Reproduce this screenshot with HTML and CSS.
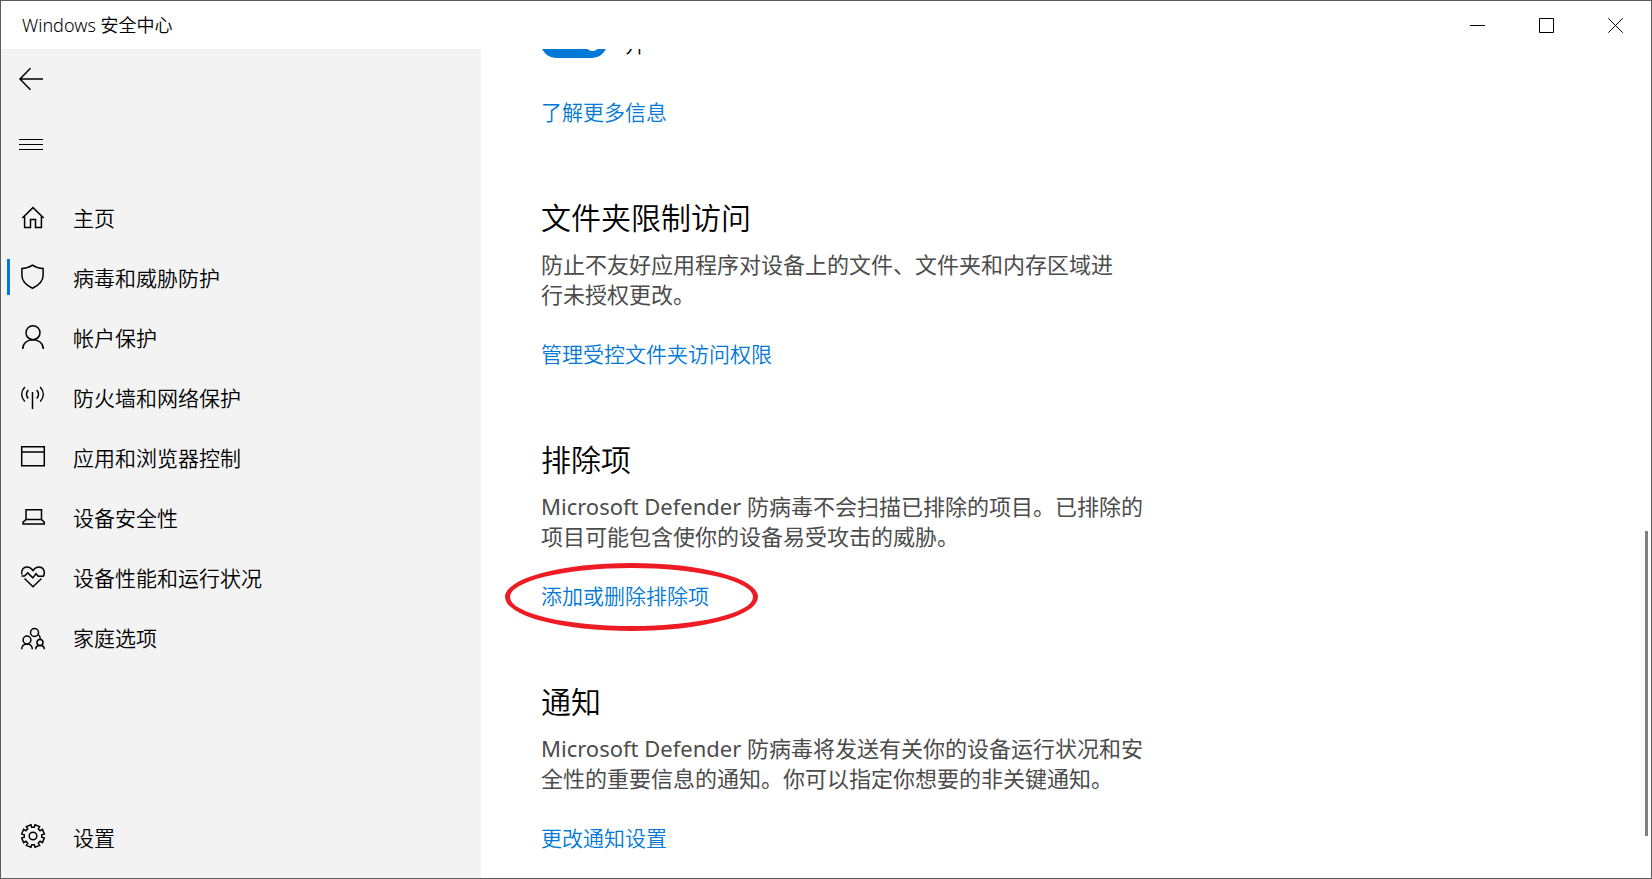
FILE: index.html
```
<!DOCTYPE html>
<html lang="zh-CN">
<head>
    <meta charset="UTF-8">
    <meta name="viewport" content="width=device-width, initial-scale=1.0">
    <title>Windows 安全中心</title>
    <link rel="stylesheet" href="styles.css">
</head>
<body>
    <div class="window">
        <header class="titlebar">
            <span class="titlebar-text">Windows 安全中心</span>
            <div class="window-buttons">
                <button type="button" aria-label="最小化">
                    <svg width="15" height="15" viewBox="0 0 15 15"><path d="M0 7.5h15"/></svg>
                </button>
                <button type="button" aria-label="最大化">
                    <svg width="15" height="15" viewBox="0 0 15 15"><path d="M.5.5h14v14H.5z"/></svg>
                </button>
                <button type="button" aria-label="关闭">
                    <svg width="15" height="15" viewBox="0 0 15 15"><path d="M.3.3l14.4 14.4M14.7.3L.3 14.7"/></svg>
                </button>
            </div>
        </header>

        <div class="main">
            <aside class="sidebar">
                <button type="button" class="icon-button" aria-label="返回">
                    <svg class="icon" viewBox="0 0 24 24"><path d="M24 12H1M11.5 1.3L1 12l10.5 10.7"/></svg>
                </button>
                <button type="button" class="icon-button" aria-label="菜单">
                    <svg class="icon thin" viewBox="0 0 24 24"><path d="M0 7.5h24M0 12.5h24M0 17.5h24"/></svg>
                </button>

                <nav class="nav">
                    <a href="#" class="nav-item">
                        <svg class="icon" viewBox="0 0 24 24"><path d="M1.3 12L12 1.6 22.7 12M3.6 10v11.5h5.9v-8h5v8h5.9V10"/></svg>
                        <span>主页</span>
                    </a>
                    <a href="#" class="nav-item active">
                        <svg class="icon" viewBox="0 0 24 24"><path d="M11.5-.9C8.5 1.200 5 2.400.9 2.400v7c0 6 4.800 10 10.600 12.800 5.800-2.800 10.600-6.800 10.600-12.800v-7C18 2.400 14.500 1.200 11.500-.9z"/></svg>
                        <span>病毒和威胁防护</span>
                    </a>
                    <a href="#" class="nav-item">
                        <svg class="icon" viewBox="0 0 24 24"><circle cx="12" cy="6.7" r="7"/><path d="M1.700 23c0-5.700 4.500-9.300 10.300-9.300S22.300 17.300 22.300 23"/></svg>
                        <span>帐户保护</span>
                    </a>
                    <a href="#" class="nav-item">
                        <svg class="icon" viewBox="0 0 24 24"><path d="M11.500 6v17M3.800 1C-.3 5.500-.3 11 3.800 15.500M19.200 1c4.100 4.500 4.100 10 0 14.500M7.300 4c-2.400 2.800-2.400 5.800 0 8.600M15.700 4c2.400 2.800 2.400 5.800 0 8.600"/></svg>
                        <span>防火墙和网络保护</span>
                    </a>
                    <a href="#" class="nav-item">
                        <svg class="icon" viewBox="0 0 24 24"><path d="M.7.700h22.600v19H.7zM.7 6h22.600"/></svg>
                        <span>应用和浏览器控制</span>
                    </a>
                    <a href="#" class="nav-item">
                        <svg class="icon" viewBox="0 0 24 24"><path d="M5 13.600V3.700h15.500v9.900zM5 13.600l-3 2.600V18h21.300v-1.800l-2.800-2.600"/></svg>
                        <span>设备安全性</span>
                    </a>
                    <a href="#" class="nav-item">
                        <svg class="icon" viewBox="0 0 24 24"><path d="M.9 8.500C-.1 4 2.500 1 6 1c2.800 0 4.500 1.300 6 3.500C13.500 2.300 15.200 1 18 1c4.500 0 6.800 4.800 4.300 9.300h-5l-2.300-2.600-3.200 4.200-5-5L3.500 10H.5M3.500 12.500l8.500 8.200 8.500-8.200"/></svg>
                        <span>设备性能和运行状况</span>
                    </a>
                    <a href="#" class="nav-item">
                        <svg class="icon" viewBox="0 0 24 24"><circle cx="13.500" cy="6.500" r="4"/><circle cx="6" cy="14" r="3.900"/><circle cx="19" cy="16.500" r="3"/><path d="M.7 23.200c0-3.200 2.300-5.300 5.300-5.300s5.300 2.100 5.300 5.300M14.700 23.200c0-2.300 1.800-3.700 4.300-3.700s4.300 1.400 4.300 3.700M17.300 8.500c1.400 1 2 2.700 2 4.500"/></svg>
                        <span>家庭选项</span>
                    </a>
                </nav>

                <a href="#" class="nav-item settings">
                    <svg class="icon" viewBox="-12 -10 24 24"><circle r="3.8"/><path d="M2-11.300L1.300-8.700H-1.300L-2-11.300-6.600-9.400-5.300-7.100-7.100-5.300-9.400-6.600-11.300-2-8.700-1.300V1.300L-11.300 2-9.400 6.600-7.100 5.300-5.300 7.100-6.600 9.400-2 11.300-1.300 8.700H1.300L2 11.300 6.600 9.400 5.300 7.100 7.100 5.300 9.400 6.600 11.300 2 8.700 1.300V-1.300L11.300-2 9.400-6.600 7.100-5.300 5.300-7.100 6.600-9.400z"/></svg>
                    <span>设置</span>
                </a>
            </aside>

            <main class="content">
                <section class="section">
                    <div class="toggle-row">
                        <input type="checkbox" class="toggle" id="toggleProtection" checked>
                        <label for="toggleProtection">开</label>
                    </div>
                    <a href="#" class="link">了解更多信息</a>
                </section>

                <section class="section">
                    <h2>文件夹限制访问</h2>
                    <p>防止不友好应用程序对设备上的文件、文件夹和内存区域进<br>行未授权更改。</p>
                    <a href="#" class="link">管理受控文件夹访问权限</a>
                </section>

                <section class="section">
                    <h2>排除项</h2>
                    <p>Microsoft Defender 防病毒不会扫描已排除的项目。已排除的<br>项目可能包含使你的设备易受攻击的威胁。</p>
                    <a href="#" class="link circled">添加或删除排除项</a>
                </section>

                <section class="section">
                    <h2>通知</h2>
                    <p>Microsoft Defender 防病毒将发送有关你的设备运行状况和安<br>全性的重要信息的通知。你可以指定你想要的非关键通知。</p>
                    <a href="#" class="link">更改通知设置</a>
                </section>

                <div class="scroll-thumb"></div>
            </main>
        </div>
    </div>
</body>
</html>
```
FILE: styles.css
```
*,
*::before,
*::after {
    box-sizing: border-box;
}

body {
    margin: 0;
    font-family: "Noto Sans", "Noto Sans CJK SC", sans-serif;
    font-weight: 350;
    color: #000;
    background-color: #fff;
}

button {
    border: none;
    padding: 0;
    background: none;
    cursor: pointer;
}

a {
    text-decoration: none;
}

svg {
    display: block;
    fill: none;
    stroke: #000;
}

.window {
    display: flex;
    flex-direction: column;
    height: 100vh;
    border: 1px solid #5c5c5c;
    overflow: hidden;
}

/* title bar */

.titlebar {
    display: flex;
    flex: none;
    justify-content: space-between;
    height: 48px;
    padding: 0 1px 0 21px;
}

.titlebar-text {
    font-size: 18px;
    line-height: 48px;
}

.window-buttons {
    display: flex;
}

.window-buttons button {
    display: flex;
    justify-content: center;
    align-items: flex-start;
    width: 69px;
    padding-top: 17px;
}

/* sidebar */

.main {
    display: flex;
    flex: 1;
    min-height: 0;
}

.sidebar {
    display: flex;
    flex-direction: column;
    flex: none;
    width: 480px;
    padding-bottom: 10px;
    background-color: #f3f3f3;
}

.icon-button {
    width: 60px;
    height: 60px;
    margin-bottom: 5px;
    padding-left: 18px;
}

.icon {
    flex: none;
    width: 24px;
    height: 24px;
    stroke-width: 1.5;
    overflow: visible;
}

.icon.thin {
    stroke-width: 1;
}

.nav {
    margin-top: 9px;
}

.nav-item {
    position: relative;
    display: flex;
    align-items: center;
    gap: 28px;
    height: 60px;
    padding-left: 20px;
    font-size: 21px;
    color: #000;
}

.nav-item span {
    padding-bottom: 2px;
}

.nav-item.active::before {
    content: "";
    position: absolute;
    top: 11px;
    left: 6px;
    width: 3px;
    height: 36px;
    background-color: #0078d7;
}

.settings {
    margin-top: auto;
}

/* content */

.content {
    position: relative;
    display: flex;
    flex-direction: column;
    justify-content: flex-end;
    flex: 1;
    gap: 71px;
    padding: 0 60px 25px;
    overflow: hidden;
}

.section {
    flex: none;
}

.section h2 {
    margin: 0 0 11px;
    font-size: 30px;
    font-weight: 350;
    line-height: 40px;
}

.section p {
    margin: 0 0 30px;
    font-size: 22px;
    font-weight: 400;
    line-height: 30px;
    color: #4c4c4c;
}

.link {
    display: block;
    width: fit-content;
    font-size: 21px;
    line-height: 30px;
    color: #0078d7;
}

.toggle-row {
    display: flex;
    align-items: center;
    gap: 18px;
    height: 30px;
    margin-bottom: 39px;
    font-size: 21px;
}

.toggle {
    display: flex;
    justify-content: flex-end;
    align-items: center;
    width: 66px;
    height: 30px;
    margin: 0;
    padding-right: 7px;
    border-radius: 15px;
    background-color: #0078d7;
    appearance: none;
}

.toggle::before {
    content: "";
    width: 15px;
    height: 15px;
    border-radius: 50%;
    background-color: #fff;
}

.circled {
    position: relative;
}

.circled::after {
    content: "";
    position: absolute;
    top: -18px;
    left: -36px;
    width: 253px;
    height: 68px;
    border: 5px solid #ed1c24;
    border-radius: 50%;
    pointer-events: none;
}

.scroll-thumb {
    position: absolute;
    right: 3px;
    bottom: 42px;
    width: 3px;
    height: 305px;
    background-color: #808080;
}
```
